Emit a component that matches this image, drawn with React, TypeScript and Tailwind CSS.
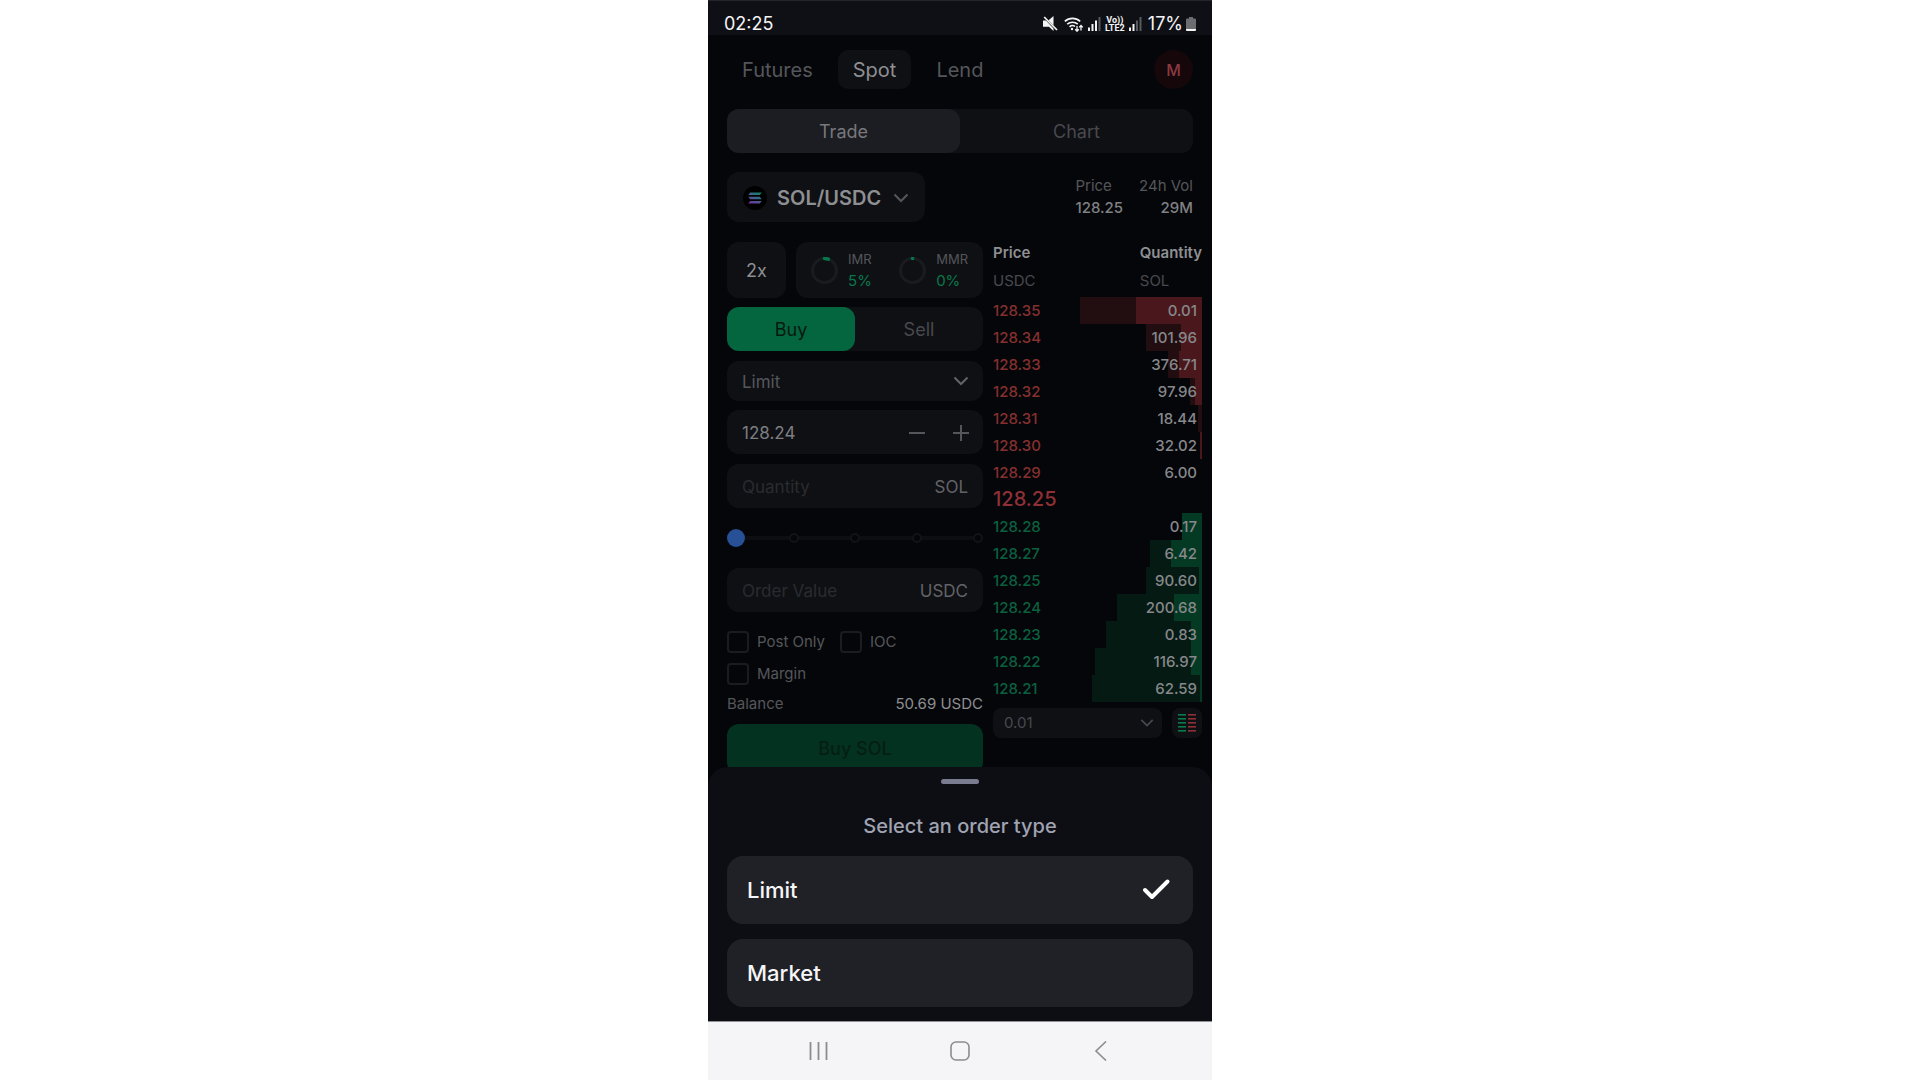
import React, { useState } from "react";

/* ── Data ── */
interface BookRow {
  price: string;
  quantity: string;
  size: number; // solid bar, % of the table width
  depth: number; // faint cumulative bar, % of the table width
}

const asks: BookRow[] = [
  { price: "128.35", quantity: "0.01", size: 31.5, depth: 58.3 },
  { price: "128.34", quantity: "101.96", size: 10.2, depth: 26.8 },
  { price: "128.33", quantity: "376.71", size: 11, depth: 16.4 },
  { price: "128.32", quantity: "97.96", size: 3.5, depth: 5.8 },
  { price: "128.31", quantity: "18.44", size: 0, depth: 2 },
  { price: "128.30", quantity: "32.02", size: 1, depth: 1 },
  { price: "128.29", quantity: "6.00", size: 0, depth: 0 },
];

const bids: BookRow[] = [
  { price: "128.28", quantity: "0.17", size: 9.6, depth: 9.6 },
  { price: "128.27", quantity: "6.42", size: 14.8, depth: 25 },
  { price: "128.25", quantity: "90.60", size: 1.5, depth: 26.8 },
  { price: "128.24", quantity: "200.68", size: 13.4, depth: 40.6 },
  { price: "128.23", quantity: "0.83", size: 5.3, depth: 46 },
  { price: "128.22", quantity: "116.97", size: 5.3, depth: 51.3 },
  { price: "128.21", quantity: "62.59", size: 1, depth: 52.8 },
];

/* ── Icons ── */
function Chevron({ className = "w-4 h-4" }: { className?: string }) {
  return (
    <svg viewBox="0 0 16 16" fill="none" stroke="currentColor" strokeWidth="2" className={`shrink-0 ${className}`}>
      <path d="M1.5 4.5 8 11l6.5-6.5" />
    </svg>
  );
}

function SignalIcon({ bars }: { bars: number }) {
  return (
    <svg viewBox="0 0 13 14" className="w-[13px] h-[14px]">
      {[0, 1, 2, 3].map((i) => (
        <rect key={i} x={i * 3.5} y={10.5 - i * 3.5} width="2" height={3.5 + i * 3.5} fill={i < bars ? "#f4f4f5" : "#58595e"} />
      ))}
    </svg>
  );
}

function SolanaLogo() {
  return (
    <svg viewBox="0 0 24 24" className="w-6 h-6 shrink-0">
      <defs>
        <linearGradient id="sol" x1="16" y1="6" x2="9" y2="18" gradientUnits="userSpaceOnUse">
          <stop offset="0" stopColor="#12806c" />
          <stop offset="0.5" stopColor="#3f6291" />
          <stop offset="1" stopColor="#70329a" />
        </linearGradient>
      </defs>
      <circle cx="12" cy="12" r="12" fill="#000" />
      <path fill="url(#sol)" d="M7.2 6.5h11.6l-2 2.6H5.2zM5.2 10.7h11.6l2 2.6H7.2zM7.2 14.9h11.6l-2 2.6H5.2z" />
    </svg>
  );
}

function Ring({ percent }: { percent: number }) {
  return (
    <svg viewBox="0 0 27 27" fill="none" strokeWidth="3" className="w-[27px] h-[27px] shrink-0">
      <circle cx="13.5" cy="13.5" r="12" stroke="#1a1b1f" />
      <circle
        cx="13.5"
        cy="13.5"
        r="12"
        pathLength="100"
        stroke="#04784a"
        strokeWidth="3.5"
        strokeLinecap="round"
        strokeDasharray={`${percent + 0.2} 100`}
        transform="rotate(-90 13.5 13.5)"
      />
    </svg>
  );
}

/* ── Status bar ── */
function StatusBar() {
  return (
    <header className="flex h-[35px] shrink-0 items-center justify-between border-t border-[#25262b] bg-[#0f1016] px-4 pt-[11px] text-[#f4f4f5]">
      <span className="text-lg leading-6">02:25</span>
      <div className="flex items-center">
        <svg viewBox="0 0 15 15" fill="#f4f4f5" className="w-[15px] h-[15px]">
          <path d="M0 4.6h3l7.500 7.900V15L6 10.800H0zM5.600 4.200 10.500 0v9.200z" />
          <path d="m1.200 1 12.800 13" stroke="#f4f4f5" strokeWidth="1.700" />
        </svg>
        <svg viewBox="0 0 20 16" fill="none" stroke="#f4f4f5" strokeWidth="1.600" className="ml-1.5 w-5 h-4">
          <path d="M.8 5.400a11.400 11.400 0 0 1 15.400 0M3.200 8.200a8 8 0 0 1 10.600 0M5.600 10.800a4.400 4.400 0 0 1 5.400-.4" />
          <circle cx="8" cy="13" r="1.200" fill="#f4f4f5" stroke="none" />
          <path strokeWidth="1.300" d="M13 10v5M11.200 13.200l1.800 2 1.800-2M17 14.600v-5M15.200 11.400l1.800-2 1.800 2" />
        </svg>
        <div className="ml-1">
          <SignalIcon bars={3} />
        </div>
        <div className="mx-1 flex w-5 flex-col items-center font-['Roboto',sans-serif] text-[9px] font-bold leading-[8px]">
          <span>Vo))</span>
          <span>LTE2</span>
        </div>
        <SignalIcon bars={2} />
        <span className="ml-1.5 text-lg leading-6">17%</span>
        <svg viewBox="0 0 10 14" className="ml-[3px] w-[10px] h-[14px]">
          <path fill="#6c6d71" d="M3 0h4v1.500h2a1 1 0 0 1 1 1V12H0V2.500a1 1 0 0 1 1-1h2z" />
          <path fill="#f4f4f5" d="M0 12h10v1a1 1 0 0 1-1 1H1a1 1 0 0 1-1-1z" />
        </svg>
      </div>
    </header>
  );
}

/* ── Top part of the page ── */
function TopNav() {
  return (
    <div className="flex items-center justify-between">
      <nav className="flex gap-2.5 text-xl leading-[38px] text-[#55565b]">
        <a href="#futures" className="px-[15px] pt-px">
          Futures
        </a>
        <a href="#spot" aria-current="page" className="rounded-[10px] bg-[#0f1014] px-[15px] pt-px text-[#8e8f92]">
          Spot
        </a>
        <a href="#lend" className="px-[15px] pt-px">
          Lend
        </a>
      </nav>
      <button type="button" className="h-[39px] w-[39px] rounded-full bg-[#16070b] text-base font-medium text-[#8a3a40]">
        M
      </button>
    </div>
  );
}

function PairHeader() {
  return (
    <div className="mt-[19px] flex items-center justify-between">
      <button type="button" className="flex h-[50px] items-center rounded-xl bg-[#0f1014] px-4 pt-px text-[#8e8f92]">
        <SolanaLogo />
        <span className="ml-2.5 mr-3 text-xl font-semibold">SOL/USDC</span>
        <Chevron className="w-4 h-4 text-[#55565b]" />
      </button>
      <dl className="flex gap-4 text-[15px] leading-[22px]">
        <div>
          <dt className="text-[#55565b]">Price</dt>
          <dd className="font-medium text-[#808184]">128.25</dd>
        </div>
        <div className="text-right">
          <dt className="text-[#55565b]">24h Vol</dt>
          <dd className="font-medium text-[#808184]">29M</dd>
        </div>
      </dl>
    </div>
  );
}

/* ── Order form ── */
function Ratio({ label, percent }: { label: string; percent: number }) {
  return (
    <div className="flex items-center gap-2.5">
      <Ring percent={percent} />
      <div className="leading-[22px]">
        <p className="text-[13px] text-[#55565b]">{label}</p>
        <p className="text-[15px] text-[#08784a]">{percent}%</p>
      </div>
    </div>
  );
}

function AmountField({ label, unit }: { label: string; unit: string }) {
  return (
    <label className="flex h-11 items-center rounded-xl bg-[#0f1014] px-[15px] pt-[3px] text-[17px] text-[#626368]">
      <input type="text" aria-label={label} placeholder={label} className="min-w-0 flex-1 bg-transparent placeholder:text-[#2a2b2f] focus:outline-none" />
      {unit}
    </label>
  );
}

function Check({ label }: { label: string }) {
  return (
    <label className="flex items-center gap-2">
      <input type="checkbox" className="h-[22px] w-[22px] appearance-none rounded-sm border-2 border-[#1b1c20] checked:bg-[#214a8c]" />
      {label}
    </label>
  );
}

function OrderForm({ orderType, onOrderType }: { orderType: string; onOrderType: (value: string) => void }) {
  const [price, setPrice] = useState("128.24");

  function step(by: number) {
    setPrice((Number(price) + by).toFixed(2));
  }

  return (
    <form className="flex flex-col">
      <div className="flex gap-2.5">
        <button type="button" className="h-14 w-[59px] rounded-xl bg-[#0f1014] pt-0.5 text-lg text-[#8e8f92]">
          2x
        </button>
        <div className="flex h-14 flex-1 items-center justify-between rounded-xl bg-[#0f1014] px-[15px]">
          <Ratio label="IMR" percent={5} />
          <Ratio label="MMR" percent={0} />
        </div>
      </div>

      <div className="mt-[9px] flex h-11 rounded-xl bg-[#0f1014] text-lg">
        <button type="button" className="flex-1 rounded-xl bg-[#04663f] pt-0.5 text-[#06180f]">
          Buy
        </button>
        <button type="button" className="flex-1 pt-0.5 text-[#48494e]">
          Sell
        </button>
      </div>

      <div className="mt-2.5 grid h-10 items-center rounded-xl bg-[#0f1014] text-[#55565b]">
        <select
          aria-label="Order type"
          value={orderType}
          onChange={(e) => onOrderType(e.target.value)}
          className="col-start-1 row-start-1 h-full appearance-none bg-transparent px-[15px] pt-[3px] text-[17px] focus:outline-none"
        >
          <option>Limit</option>
          <option>Market</option>
        </select>
        <Chevron className="pointer-events-none col-start-1 row-start-1 mr-3.5 h-4 w-4 justify-self-end text-[#626368]" />
      </div>

      <div className="mt-[9px] flex h-11 items-center gap-6 rounded-xl bg-[#0f1014] pl-[15px] pr-3 pt-[3px] text-[#55565b]">
        <input
          type="text"
          aria-label="Price"
          value={price}
          onChange={(e) => setPrice(e.target.value)}
          className="min-w-0 flex-1 bg-transparent text-[17px] text-[#7d7e82] focus:outline-none"
        />
        <button type="button" aria-label="Decrease price" onClick={() => step(-0.01)}>
          <svg viewBox="0 0 20 20" stroke="currentColor" strokeWidth="2" className="w-5 h-5">
            <path d="M2 9h16" />
          </svg>
        </button>
        <button type="button" aria-label="Increase price" onClick={() => step(0.01)}>
          <svg viewBox="0 0 20 20" stroke="currentColor" strokeWidth="2" className="w-5 h-5">
            <path d="M2 9h16M10 1v16" />
          </svg>
        </button>
      </div>

      <div className="mt-2.5">
        <AmountField label="Quantity" unit="SOL" />
      </div>

      <div className="my-5 grid h-5 items-center">
        <div className="col-start-1 row-start-1 mx-1 h-1 bg-[#0d0e12]" />
        <div className="col-start-1 row-start-1 flex justify-between">
          {[0, 25, 50, 75, 100].map((mark) => (
            <span key={mark} className="h-2.5 w-2.5 rounded-full border-2 border-[#121317] bg-[#050609]" />
          ))}
        </div>
        <input
          type="range"
          aria-label="Share of balance"
          defaultValue={0}
          className="relative col-start-1 row-start-1 w-full appearance-none bg-transparent [&::-webkit-slider-thumb]:h-[18px] [&::-webkit-slider-thumb]:w-[18px] [&::-webkit-slider-thumb]:appearance-none [&::-webkit-slider-thumb]:rounded-full [&::-webkit-slider-thumb]:bg-[#275097]"
        />
      </div>

      <AmountField label="Order Value" unit="USDC" />

      <div className="mt-[19px] flex flex-wrap gap-x-[15px] gap-y-2.5 text-[15px] leading-[22px] text-[#55565b]">
        <Check label="Post Only" />
        <Check label="IOC" />
        <Check label="Margin" />
      </div>

      <div className="mt-2 flex justify-between text-[15px] leading-[22px] text-[#55565b]">
        <span>Balance</span>
        <span className="text-[#8e8f92]">50.69 USDC</span>
      </div>

      <button type="submit" className="mt-[9px] h-[50px] rounded-xl bg-[#043220] text-lg font-medium text-[#041e14]">
        Buy SOL
      </button>
    </form>
  );
}

/* ── Order book ── */
function BookRows({ rows, side }: { rows: BookRow[]; side: "ask" | "bid" }) {
  const solid = side === "ask" ? "#4a171c" : "#043a24";
  const faint = side === "ask" ? "#220d11" : "#051a13";

  return (
    <tbody>
      {rows.map((row) => (
        <tr
          key={row.price}
          className="h-[27px]"
          style={{
            backgroundImage: `linear-gradient(to left, ${solid} ${row.size}%, ${faint} ${row.size}%, ${faint} ${row.depth}%, transparent ${row.depth}%)`,
          }}
        >
          <td className={side === "ask" ? "font-medium text-[#85302f]" : "font-medium text-[#0b6040]"}>{row.price}</td>
          <td className="pr-[5px] text-right font-medium text-[#87888b]">{row.quantity}</td>
        </tr>
      ))}
    </tbody>
  );
}

function OrderBook() {
  return (
    <section>
      <table className="w-full text-[15px] leading-[22px]">
        <thead className="text-left">
          <tr className="text-[#8e8f92]">
            <th className="font-semibold">Price</th>
            <th className="w-[61px] font-semibold">Quantity</th>
          </tr>
          <tr className="h-[33px] text-[#48494e]">
            <td>USDC</td>
            <td>SOL</td>
          </tr>
        </thead>
        <BookRows rows={asks} side="ask" />
        <tbody>
          <tr className="h-[27px]">
            <td colSpan={2} className="text-xl font-medium leading-[27px] text-[#8f3036]">
              128.25
            </td>
          </tr>
        </tbody>
        <BookRows rows={bids} side="bid" />
      </table>

      <div className="mt-1.5 flex gap-2.5">
        <div className="grid h-[30px] flex-1 items-center rounded-lg bg-[#0f1014] text-[#48494e]">
          <select aria-label="Grouping" className="col-start-1 row-start-1 h-full appearance-none bg-transparent px-[11px] pt-px text-[15px] focus:outline-none">
            <option>0.01</option>
            <option>0.1</option>
          </select>
          <Chevron className="pointer-events-none col-start-1 row-start-1 mr-2 h-3.5 w-3.5 justify-self-end" />
        </div>
        <button type="button" aria-label="Book layout" className="flex h-[30px] w-[30px] items-center justify-center rounded-lg bg-[#0f1014]">
          <svg viewBox="0 0 18 20" className="h-5 w-[18px]">
            {[1, 5, 9, 13, 17].map((y) => (
              <g key={y}>
                <rect x="0" y={y} width="8" height="1.6" fill="#0a7a4b" />
                <rect x="10" y={y} width="8" height="1.6" fill="#8f3036" />
              </g>
            ))}
          </svg>
        </button>
      </div>
    </section>
  );
}

/* ── Bottom sheet ── */
function OrderTypeSheet({ value, onChange }: { value: string; onChange: (value: string) => void }) {
  return (
    <div role="dialog" aria-label="Select an order type" className="absolute inset-x-0 bottom-0 rounded-t-[20px] bg-[#0d0e14] px-[19px] pb-3.5 pt-3">
      <div className="mx-auto h-[5px] w-[38px] rounded-full bg-[#797b8e]" />
      <h2 className="mt-7 text-center text-xl font-medium leading-7 text-[#a0a3b2]">Select an order type</h2>
      <div className="mt-4 flex flex-col gap-[15px]">
        {["Limit", "Market"].map((type) => (
          <button
            key={type}
            type="button"
            onClick={() => onChange(type)}
            className="flex h-[68px] items-center justify-between rounded-2xl bg-[#202126] px-5 text-[22px] font-medium text-[#f6f6f8]"
          >
            {type}
            {type === value && (
              <svg viewBox="0 0 30 24" fill="none" stroke="#fff" strokeWidth="4" strokeLinecap="round" strokeLinejoin="round" className="mr-0.5 h-6 w-[30px]">
                <path d="m4 12 7 7L26.500 3.500" />
              </svg>
            )}
          </button>
        ))}
      </div>
    </div>
  );
}

/* ── System navigation ── */
function SystemNav() {
  return (
    <footer className="flex h-[59px] shrink-0 items-center justify-around border-t border-[#8f9094] bg-[#f5f5f8] px-10 text-[#8b8c90]">
      <button type="button" aria-label="Recent apps">
        <svg viewBox="0 0 20 20" stroke="currentColor" strokeWidth="1.8" className="w-5 h-5">
          <path d="M1.500 1v18M9.500 1v18M17.500 1v18" />
        </svg>
      </button>
      <button type="button" aria-label="Home">
        <svg viewBox="0 0 20 20" fill="none" stroke="currentColor" strokeWidth="1.6" className="w-5 h-5">
          <rect x="1" y="1" width="18" height="18" rx="5" />
        </svg>
      </button>
      <button type="button" aria-label="Back">
        <svg viewBox="0 0 20 20" fill="none" stroke="currentColor" strokeWidth="1.6" className="w-5 h-5">
          <path d="M15 .5 5 10l10 9.500" />
        </svg>
      </button>
    </footer>
  );
}

export default function App() {
  const [orderType, setOrderType] = useState("Limit");

  return (
    <div className="flex min-h-screen justify-center bg-white font-['Inter',sans-serif]">
      <div className="flex w-full max-w-[504px] flex-col bg-[#050609]">
        <StatusBar />
        <main className="relative flex-1 overflow-hidden pb-[206px]">
          <div className="px-[19px] pt-[15px]">
            <TopNav />
            <div className="mt-5 flex h-11 rounded-xl bg-[#0f1014] text-lg">
              <button type="button" className="flex-1 rounded-xl bg-[#1c1d22] pt-0.5 text-[#77787c]">
                Trade
              </button>
              <button type="button" className="flex-1 pt-0.5 text-[#48494e]">
                Chart
              </button>
            </div>
            <PairHeader />
          </div>
          <div className="mt-5 grid grid-cols-[minmax(0,256fr)_minmax(0,209fr)] gap-2.5 pl-[19px] pr-2.5">
            <OrderForm orderType={orderType} onOrderType={setOrderType} />
            <OrderBook />
          </div>
          <OrderTypeSheet value={orderType} onChange={setOrderType} />
        </main>
        <SystemNav />
      </div>
    </div>
  );
}
